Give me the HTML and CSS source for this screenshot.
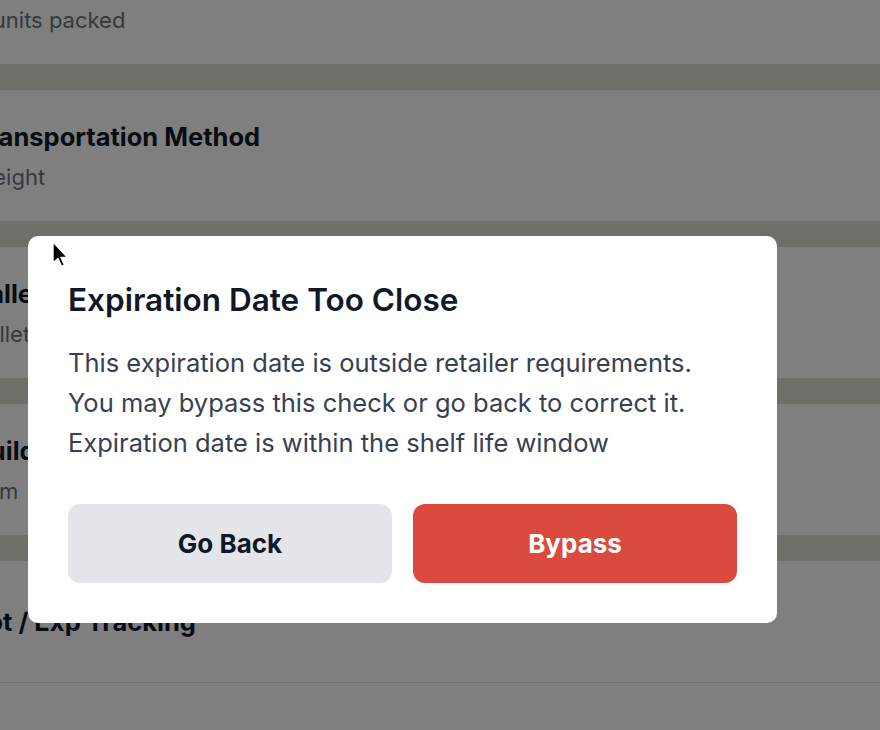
FILE: index.html
```html
<!DOCTYPE html>
<html lang="en">
<head>
    <meta charset="UTF-8">
    <meta name="viewport" content="width=device-width, initial-scale=1.0">
    <title>Expiration Check</title>
    <link rel="stylesheet" href="styles.css">
</head>
<body>

    <div class="steps">
        <div class="step">
            <div class="step-title">Cases Packed</div>
            <div class="step-sub">8 units packed</div>
        </div>
        <div class="step">
            <div class="step-title">Transportation Method</div>
            <div class="step-sub">Freight</div>
        </div>
        <div class="step">
            <div class="step-title">Pallet Type</div>
            <div class="step-sub">Pallet</div>
        </div>
        <div class="step">
            <div class="step-title">Build Type</div>
            <div class="step-sub">Item</div>
        </div>
        <div class="step step-head">
            <div class="step-title">Lot / Exp Tracking</div>
        </div>
        <div class="step step-row"></div>
    </div>

    <div class="backdrop"></div>

    <div class="dialog">
        <h2 class="dialog-title">Expiration Date Too Close</h2>
        <p class="dialog-text">
            This expiration date is outside retailer requirements.<br>
            You may bypass this check or go back to correct it.<br>
            Expiration date is within the shelf life window
        </p>
        <div class="dialog-actions">
            <button class="btn btn-back">Go Back</button>
            <button class="btn btn-bypass">Bypass</button>
        </div>
    </div>

    <!-- mouse pointer caught in the capture -->
    <svg class="pointer" width="18" height="30" viewBox="0 0 18 30">
        <path d="M2 1 L2 22 L7 17.5 L10.5 25.5 L13.5 24 L10 16.5 L16.5 16.5 Z" fill="#000" stroke="#fff" stroke-width="1.4" stroke-linejoin="round"/>
    </svg>

</body>
</html>
```

FILE: styles.css
```css
/* Page behind the dialog */
body {
    margin: 0;
    font-family: Inter, "Noto Sans", sans-serif;
    background-color: #dedcd2;
    overflow: hidden;
}

.steps {
    display: flex;
    flex-direction: column;
    gap: 26px;
    margin-top: -67px;
    margin-left: -27px;
}

.step {
    background-color: #fff;
    min-height: 131px;
    box-sizing: border-box;
    padding-top: 3px;
    display: flex;
    flex-direction: column;
    justify-content: center;
}

.step-title {
    font-size: 25.5px;
    font-weight: 700;
    line-height: 30px;
    color: #111827;
}

.step-sub {
    font-size: 22px;
    line-height: 30px;
    margin-top: 10px;
    color: #6b7280;
}

.step-head {
    min-height: 122px;
    padding-top: 0;
    border-bottom: 1px solid #dedede;
}

.step-row {
    margin-top: -26px;
    min-height: 200px;
}

/* Overlay */
.backdrop {
    position: fixed;
    inset: 0;
    background-color: rgba(0, 0, 0, 0.5);
}

.dialog {
    position: fixed;
    left: 28px;
    top: 236px;
    width: 749px;
    box-sizing: border-box;
    padding: 40px;
    background-color: #fff;
    border-radius: 10px;
}

.dialog-title {
    margin: 0;
    font-size: 31.5px;
    font-weight: 600;
    line-height: 48px;
    color: #111827;
}

.dialog-text {
    margin: 19px 0 0;
    font-size: 25.5px;
    line-height: 40px;
    color: #374151;
}

.dialog-actions {
    display: flex;
    gap: 21px;
    margin-top: 41px;
}

.btn {
    flex: 1;
    height: 79px;
    border: none;
    border-radius: 12px;
    font-family: inherit;
    font-size: 26px;
    font-weight: 700;
}

.btn-back {
    background-color: #e4e5ea;
    color: #111827;
}

.btn-bypass {
    background-color: #db4a3f;
    color: #fff;
}

.pointer {
    position: fixed;
    left: 51px;
    top: 241px;
}
```
